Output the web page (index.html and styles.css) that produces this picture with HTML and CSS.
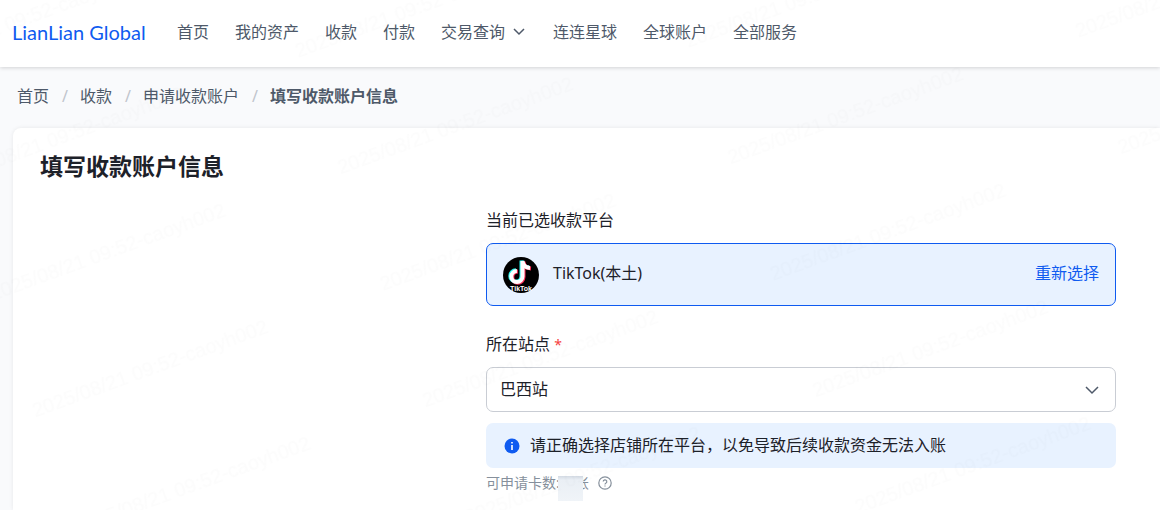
FILE: index.html
```
<!DOCTYPE html>
<html lang="zh-CN">
<head>
    <meta charset="UTF-8">
    <meta name="viewport" content="width=device-width, initial-scale=1.0">
    <title>填写收款账户信息</title>
    <link rel="stylesheet" href="styles.css">
</head>
<body>
    <header class="header">
        <a class="logo" href="#">LianLian Global</a>
        <nav class="nav">
            <a class="nav_link" href="#">首页</a>
            <a class="nav_link" href="#">我的资产</a>
            <a class="nav_link" href="#">收款</a>
            <a class="nav_link" href="#">付款</a>
            <a class="nav_link" href="#">交易查询
                <svg class="chevron" width="14" height="14" viewBox="0 0 14 14"><path d="M1 4 6 9 11 4"/></svg>
            </a>
            <a class="nav_link" href="#">连连星球</a>
            <a class="nav_link" href="#">全球账户</a>
            <a class="nav_link" href="#">全部服务</a>
        </nav>
    </header>

    <nav class="breadcrumb">
        <a href="#">首页</a>
        <span class="slash">/</span>
        <a href="#">收款</a>
        <span class="slash">/</span>
        <a href="#">申请收款账户</a>
        <span class="slash">/</span>
        <b>填写收款账户信息</b>
    </nav>

    <main class="card">
        <h1 class="title">填写收款账户信息</h1>

        <form class="form">
            <p class="label">当前已选收款平台</p>
            <div class="platform">
                <svg class="platform_logo" width="36" height="36" viewBox="0 0 36 36">
                    <circle cx="18" cy="18" r="18" fill="#000"/>
                    <g fill="none" stroke-width="4">
                        <path d="M19.500 4v15.500a5.600 5.600 0 1 1-5.600-5.600M19.500 4c.4 4 3.200 6.600 7.500 6.900" stroke="#25f4ee" transform="translate(-1 -.6)"/>
                        <path d="M19.500 4v15.500a5.600 5.600 0 1 1-5.600-5.600M19.500 4c.4 4 3.200 6.600 7.500 6.900" stroke="#fe2c55" transform="translate(1 .6)"/>
                        <path d="M19.500 4v15.500a5.600 5.600 0 1 1-5.600-5.600M19.500 4c.4 4 3.200 6.600 7.500 6.900" stroke="#fff"/>
                    </g>
                    <text class="platform_mark" x="18" y="34" text-anchor="middle">TikTok</text>
                </svg>
                <span class="platform_name">TikTok(本土)</span>
                <a class="reselect" href="#">重新选择</a>
            </div>

            <label class="label" for="site">所在站点 <span class="required">*</span></label>
            <div class="select_box">
                <select class="select" id="site">
                    <option>巴西站</option>
                </select>
                <svg class="chevron select_arrow" width="16" height="16" viewBox="0 0 16 16"><path d="M2 5 8 11 14 5"/></svg>
            </div>

            <div class="alert">
                <svg width="16" height="16" viewBox="0 0 16 16">
                    <circle cx="8" cy="8" r="7.500" fill="#0f5bf0"/>
                    <path d="M8 7v5M8 4v1.500" stroke="#fff" stroke-width="1.600"/>
                </svg>
                <span>请正确选择店铺所在平台，以免导致后续收款资金无法入账</span>
            </div>

            <div class="quota">
                <span>可申请卡数:</span>
                <span class="quota_unit">张<i class="mask"></i></span>
                <svg class="help" width="14" height="14" viewBox="0 0 14 14">
                    <circle cx="7" cy="7" r="6.200"/>
                    <path d="M5.200 5.600a1.800 1.800 0 1 1 2.600 1.600c-.6.3-.8.600-.8 1.200M7 9.400v1.200"/>
                </svg>
            </div>
        </form>
    </main>

    <svg class="watermark" width="100%" height="100%" aria-hidden="true">
        <defs>
            <pattern id="mark" width="370" height="124" patternUnits="userSpaceOnUse" patternTransform="translate(-4 368) rotate(-20)">
                <text x="20" y="60">2025/08/21 09:52-caoyh002</text>
            </pattern>
        </defs>
        <rect width="100%" height="100%" fill="url(#mark)"/>
    </svg>
</body>
</html>
```
FILE: styles.css
```
/* General */
*{
    box-sizing: border-box;
}
body{
    margin: 0px;
    min-height: 100vh;
    display: flex;
    flex-direction: column;
    overflow-x: hidden;
    background-color: #f9fafc;
    color: #1d2129;
    font-family: "Noto Sans", "Noto Sans CJK SC", sans-serif;
    font-size: 16px;
    line-height: 24px;
}
a{
    color: inherit;
    text-decoration: none;
}

/* Header */
.header{
    position: relative;
    display: flex;
    align-items: center;
    gap: 32px;
    padding: 20px 12px 23px;
    background-color: white;
    box-shadow: 0px 1px 4px rgba(0, 0, 0, 0.16);
}
.logo{
    width: 133px;
    color: #0f5bf0;
    font-family: Lato, sans-serif;
    font-size: 20px;
    white-space: nowrap;
}
.nav{
    display: flex;
    gap: 26px;
    color: #4e5969;
    white-space: nowrap;
}
.nav_link{
    display: flex;
    align-items: center;
    gap: 8px;
}
.nav_link:hover{
    color: #0f5bf0;
}
.chevron{
    fill: none;
    stroke: #4e5969;
    stroke-width: 1.5;
}

/* Breadcrumb */
.breadcrumb{
    display: flex;
    padding: 17px 17px 20px;
    color: #4e5969;
}
.slash{
    padding: 0px 12px 0px 13px;
    color: #c0c4cc;
}

/* Card */
.card{
    flex: 1;
    margin-left: 13px;
    padding: 22px 44px 10px 27px;
    background-color: white;
    border-radius: 8px 0px 0px 0px;
    box-shadow: 0px 0px 4px rgba(0, 0, 0, 0.08);
}
.title{
    margin: 0px 0px 26px;
    font-size: 23px;
    line-height: 32px;
}
.form{
    max-width: 630px;
    margin-left: auto;
}
.label{
    display: block;
    margin: 0px 0px 11px;
}
.required{
    color: #f53f3f;
    font-size: 14px;
    line-height: 16px;
}
.platform{
    display: flex;
    align-items: center;
    gap: 14px;
    height: 63px;
    margin-bottom: 26px;
    padding: 0px 16px;
    background-color: #e8f2ff;
    border: 1px solid #0f5bf0;
    border-radius: 7px;
}
.platform_mark{
    fill: white;
    font-family: "Liberation Sans", sans-serif;
    font-size: 7px;
    font-weight: bold;
}
.platform_name, .reselect{
    padding-bottom: 3px;
}
.platform_name{
    flex: 1;
}
.reselect{
    color: #0f5bf0;
}
.select_box{
    position: relative;
    margin-bottom: 11px;
}
.select{
    display: block;
    width: 100%;
    height: 45px;
    padding: 0px 13px 2px;
    appearance: none;
    background-color: white;
    border: 1px solid #c9cdd4;
    border-radius: 7px;
    color: inherit;
    font: inherit;
}
.select_arrow{
    position: absolute;
    top: 15px;
    right: 16px;
    pointer-events: none;
}
.alert{
    display: flex;
    align-items: center;
    gap: 10px;
    height: 45px;
    padding: 0px 18px;
    background-color: #e8f2ff;
    border-radius: 7px;
}
.alert span{
    padding-bottom: 2px;
}
.quota{
    display: flex;
    align-items: center;
    margin-top: 3px;
    color: #86909c;
    font-size: 14px;
}
.quota_unit{
    position: relative;
    margin: 0px 9px 0px 15px;
}
.mask{
    position: absolute;
    top: 5px;
    right: 6px;
    width: 25px;
    height: 25px;
    background: linear-gradient(#d3dae3, #eaeff5 4px, #f0f4f8);
}
.help{
    fill: none;
    stroke: #86909c;
    stroke-width: 1.2;
}

/* Watermark */
.watermark{
    position: fixed;
    top: 0px;
    left: 0px;
    pointer-events: none;
    fill: rgba(0, 0, 0, 0.01);
    font-family: "Liberation Sans", sans-serif;
    font-size: 20px;
}
```
